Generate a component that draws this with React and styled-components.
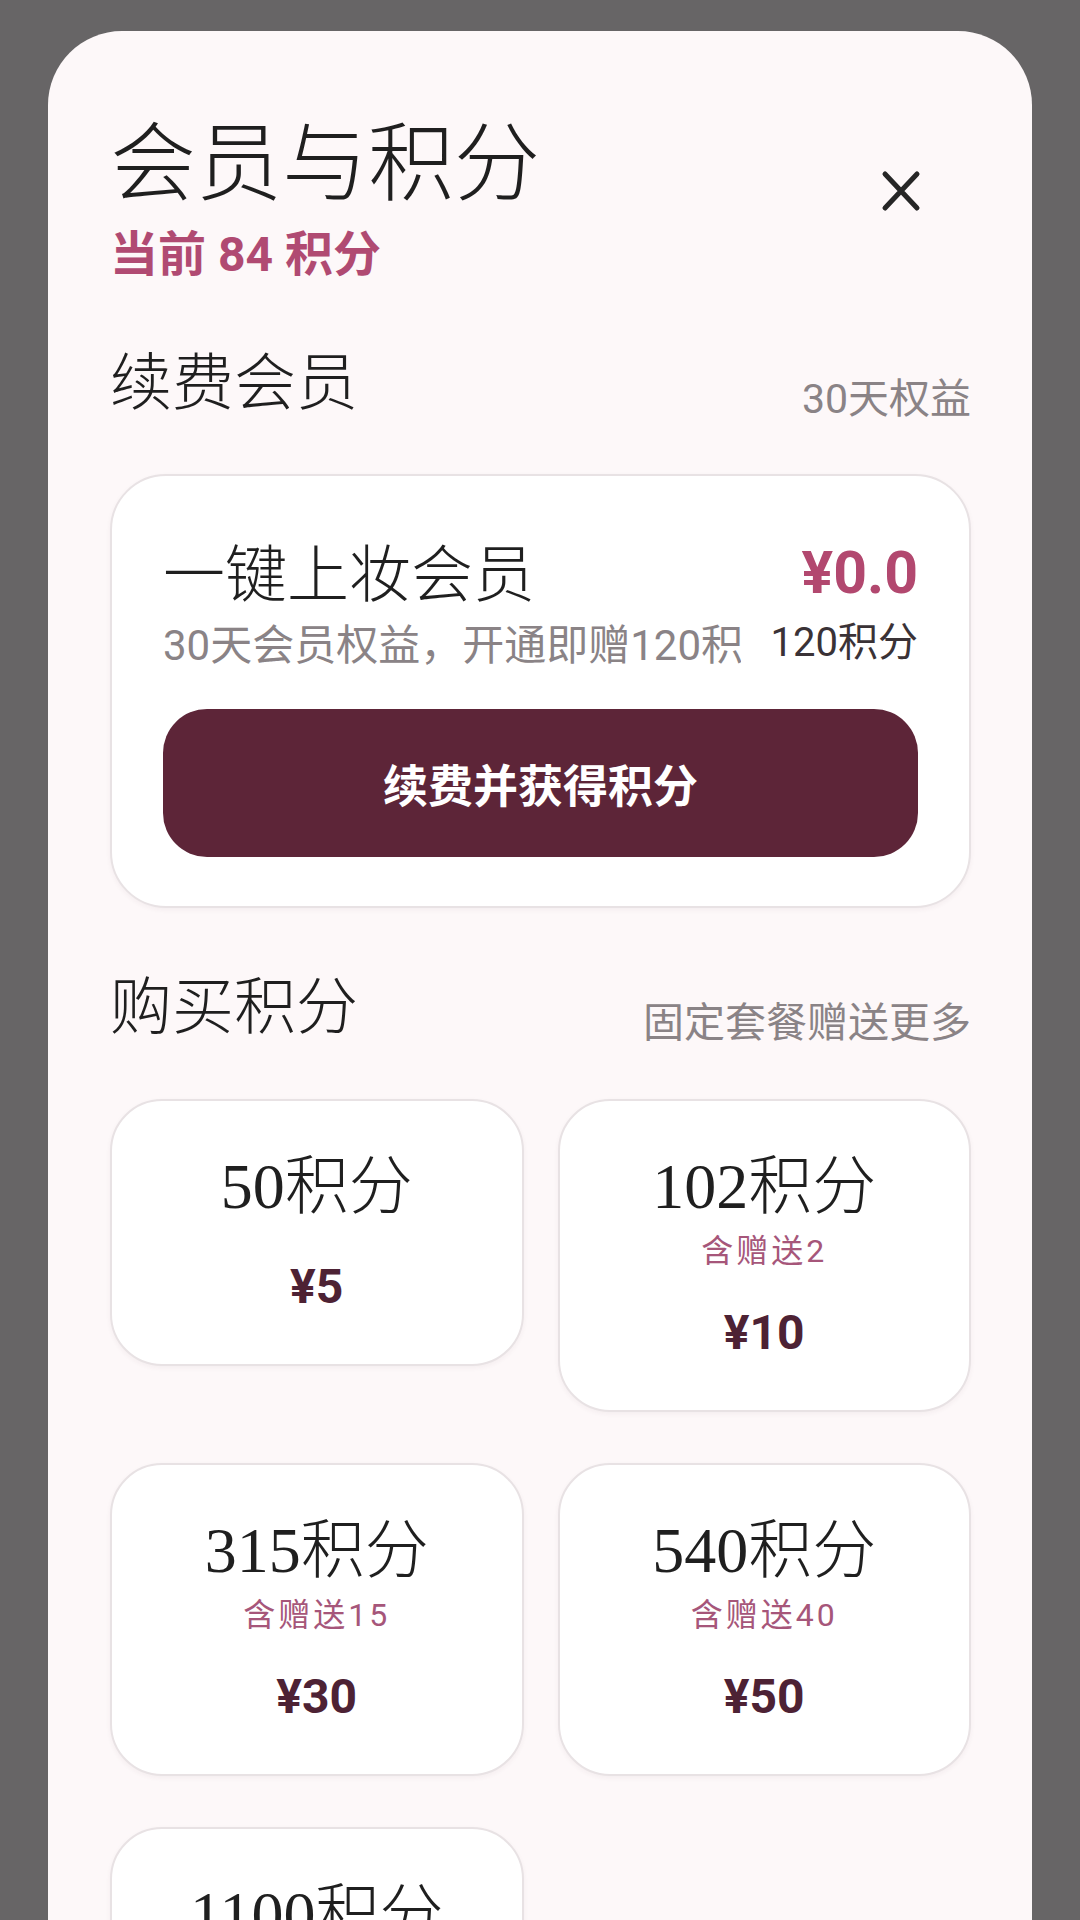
import React from "react";
import styled, { createGlobalStyle } from "styled-components";

const packages = [
  { points: 50, price: 5 },
  { points: 102, gift: 2, price: 10 },
  { points: 315, gift: 15, price: 30 },
  { points: 540, gift: 40, price: 50 },
  { points: 1100, gift: 100, price: 100 },
];

function CloseIcon() {
  return (
    <svg width="40" height="42" viewBox="0 0 40 42">
      <path
        d="M4 4 L36 38 M36 4 L4 38"
        stroke="#262626"
        strokeWidth="5"
        strokeLinecap="round"
        fill="none"
      />
    </svg>
  );
}

function App() {
  return (
    <>
      <GlobalStyle />
      <Sheet>
        <Header>
          <div>
            <Title>会员与积分</Title>
            <Balance>当前 84 积分</Balance>
          </div>
          <CloseButton aria-label="关闭">
            <CloseIcon />
          </CloseButton>
        </Header>

        <SectionHeader>
          <SectionTitle>续费会员</SectionTitle>
          <SectionHint>30天权益</SectionHint>
        </SectionHeader>

        <MemberCard>
          <MemberInfo>
            <MemberName>一键上妆会员</MemberName>
            <MemberPrice>¥0.0</MemberPrice>
            <MemberDesc>30天会员权益，开通即赠120积分</MemberDesc>
            <MemberPoints>120积分</MemberPoints>
          </MemberInfo>
          <RenewButton>续费并获得积分</RenewButton>
        </MemberCard>

        <SectionHeader $top={63}>
          <SectionTitle>购买积分</SectionTitle>
          <SectionHint>固定套餐赠送更多</SectionHint>
        </SectionHeader>

        <PackageGrid>
          {packages.map((p) => (
            <PackageCard key={p.points}>
              <PackagePoints>{p.points}积分</PackagePoints>
              {p.gift && <PackageGift>含赠送{p.gift}</PackageGift>}
              <PackagePrice>¥{p.price}</PackagePrice>
            </PackageCard>
          ))}
        </PackageGrid>
      </Sheet>
    </>
  );
}

export default App;

const displayFont = `"Liberation Serif", "Noto Sans CJK SC", serif`;
const bodyFont = `Roboto, "Noto Sans CJK SC", sans-serif`;

const GlobalStyle = createGlobalStyle`
  html, body {
    margin: 0;
    padding: 0;
    background: #676566;
  }
  body {
    font-family: ${bodyFont};
    overflow: hidden;
  }
  #root {
    height: 1920px;
    overflow: hidden;
  }
`;

const Sheet = styled.div`
  box-sizing: border-box;
  width: 984px;
  min-height: 1889px;
  margin: 31px 0 0 48px;
  padding: 84px 61px 0 62px;
  background: #fdf8f9;
  border-radius: 74px 74px 0 0;
`;

const Header = styled.div`
  display: flex;
  justify-content: space-between;
  align-items: flex-start;
`;

const Title = styled.h1`
  margin: 0;
  font-family: ${displayFont};
  font-size: 86px;
  font-weight: 300;
  line-height: 100px;
  color: #1f1f1f;
`;

const Balance = styled.div`
  margin-top: 12px;
  font-size: 48px;
  font-weight: 700;
  line-height: 56px;
  color: #b04a72;
`;

const CloseButton = styled.button`
  display: flex;
  align-items: center;
  justify-content: center;
  width: 64px;
  height: 64px;
  margin: 44px 38px 0 0;
  padding: 0;
  border: none;
  background: transparent;
  cursor: pointer;
`;

const SectionHeader = styled.div`
  display: flex;
  justify-content: space-between;
  align-items: flex-end;
  margin-top: ${(p) => p.$top ?? 64}px;
`;

const SectionTitle = styled.h2`
  margin: 0;
  font-family: ${displayFont};
  font-size: 62px;
  font-weight: 300;
  line-height: 74px;
  color: #1f1f1f;
`;

const SectionHint = styled.span`
  font-size: 41px;
  line-height: 44px;
  color: #8a8386;
`;

const Card = styled.div`
  box-sizing: border-box;
  background: #ffffff;
  border: 2px solid #e8e2e4;
  box-shadow: 0 2px 5px rgba(80, 40, 55, 0.05);
`;

const MemberCard = styled(Card)`
  margin-top: 53px;
  padding: 63px 51px 49px;
  border-radius: 56px;
`;

const MemberInfo = styled.div`
  display: grid;
  grid-template-columns: minmax(0, 1fr) auto;
  column-gap: 30px;
  row-gap: 8px;
  align-items: center;
`;

const MemberName = styled.div`
  font-family: ${displayFont};
  font-size: 62px;
  font-weight: 300;
  line-height: 74px;
  color: #1f1f1f;
`;

const MemberPrice = styled.div`
  text-align: right;
  font-size: 59px;
  font-weight: 700;
  line-height: 74px;
  color: #b2486f;
  margin-top: -6px;
`;

const MemberDesc = styled.div`
  font-size: 42px;
  line-height: 50px;
  color: #8a8386;
  white-space: nowrap;
  overflow: hidden;
`;

const MemberPoints = styled.div`
  align-self: start;
  text-align: right;
  font-size: 40px;
  line-height: 44px;
  color: #3a3236;
`;

const RenewButton = styled.button`
  display: block;
  width: 100%;
  height: 148px;
  margin-top: 38px;
  border: none;
  border-radius: 44px;
  background: #5d2538;
  color: #ffffff;
  font-family: ${bodyFont};
  font-size: 45px;
  font-weight: 700;
  cursor: pointer;
`;

const PackageGrid = styled.div`
  display: grid;
  grid-template-columns: 1fr 1fr;
  column-gap: 34px;
  row-gap: 51px;
  align-items: start;
  margin-top: 54px;
`;

const PackageCard = styled(Card)`
  display: flex;
  flex-direction: column;
  align-items: center;
  padding: 48px 20px;
  border-radius: 52px;
`;

const PackagePoints = styled.div`
  font-family: ${displayFont};
  font-size: 64px;
  font-weight: 300;
  line-height: 76px;
  color: #1f1f1f;
`;

const PackageGift = styled.div`
  margin-top: 6px;
  font-size: 32px;
  line-height: 40px;
  letter-spacing: 3px;
  color: #a6567a;
`;

const PackagePrice = styled.div`
  margin-top: 33px;
  font-size: 48px;
  font-weight: 700;
  line-height: 58px;
  color: #4d2234;
`;
